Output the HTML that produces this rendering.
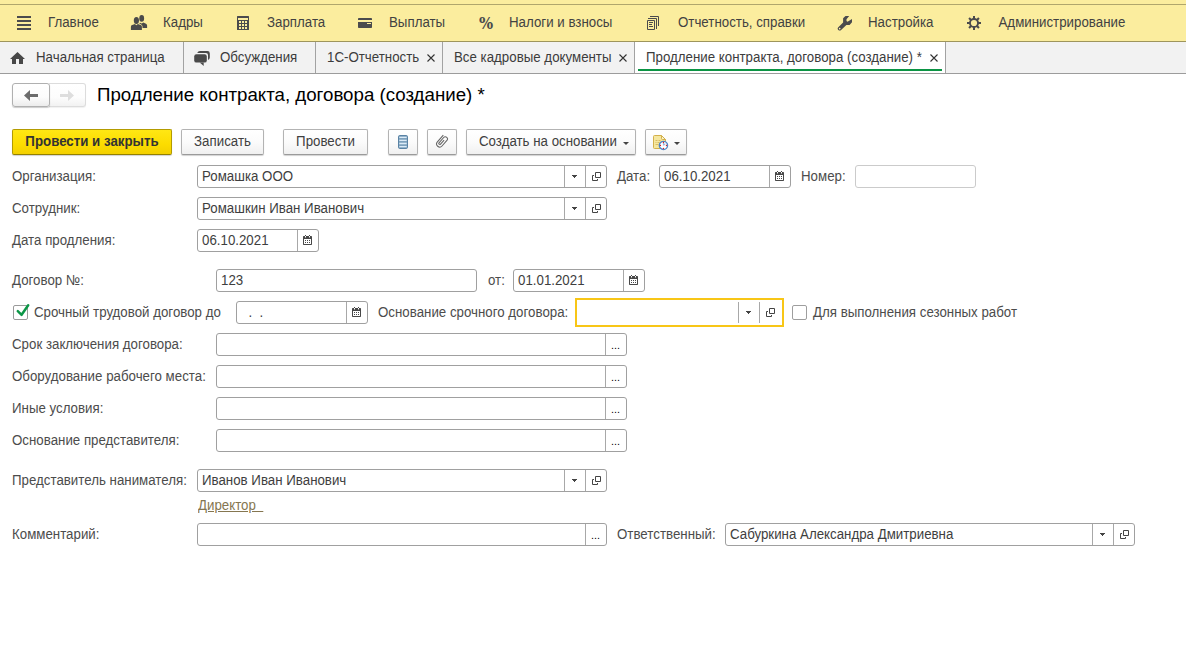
<!DOCTYPE html>
<html lang="ru">
<head>
<meta charset="utf-8">
<title>Продление контракта, договора (создание) *</title>
<style>
*{box-sizing:border-box;margin:0;padding:0}
html,body{width:1186px;height:657px;overflow:hidden;background:#fff}
body{font-family:"Liberation Sans",sans-serif;font-size:13.3px;color:#333;position:relative}
div,span,svg{position:absolute}
#topbar{left:0;top:0;width:1186px;height:41px;background:#fbed9e}
#topline{left:0;top:4px;width:1186px;height:1px;background:#b0a66c}
#topbot{left:0;top:41px;width:1186px;height:1px;background:#9e955c}
.mi{top:13px;height:20px;line-height:20px;color:#424242;white-space:nowrap;transform:scaleY(1.1)}
#tabbar{left:0;top:42px;width:1186px;height:31px;background:#f2f2f2}
#tabbot{left:0;top:73px;width:1186px;height:1px;background:#9c9c9c}
.tsep{top:42px;width:1px;height:31px;background:#a2a2a2}
.tt{top:48px;height:20px;line-height:20px;color:#3c3c3c;white-space:nowrap;transform:scaleY(1.1)}
.lbl{height:23px;line-height:23px;color:#4c4c4c;white-space:nowrap;transform:translateY(-.5px) scaleY(1.1)}
.fld{height:23px;border:1px solid #a0a0a0;border-radius:3px;background:#fff;line-height:21px;color:#3e3e3e;white-space:nowrap}
.fld .v{left:4px;top:0;white-space:pre;height:21px;transform:translateY(-.5px) scaleY(1.1)}
.sep{top:0;bottom:0;width:1px;background:#a8a8a8}
.btn{top:129px;height:26px;border:1px solid #b3b3b3;border-bottom-color:#9a9a9a;border-radius:2px;background:linear-gradient(#ffffff,#fbfbfb 50%,#f0f0f0);line-height:24px;color:#404040;text-align:center;white-space:nowrap;box-shadow:0 1px 1px rgba(0,0,0,.18)}
.btn span{position:static;display:inline-block;height:24px;transform:scaleY(1.1)}
.dots{top:1px;height:21px;line-height:21px;font-size:10.800px;color:#000}
.cb{width:15px;height:15px;border:1px solid #9a9a9a;border-radius:2px;background:#fff}
</style>
</head>
<body>
<div id="topbar"></div><div id="topline"></div><div id="topbot"></div>
<div class="mi" style="left:48px">Главное</div>
<div class="mi" style="left:163px">Кадры</div>
<div class="mi" style="left:267px">Зарплата</div>
<div class="mi" style="left:389px">Выплаты</div>
<div class="mi" style="left:509px">Налоги и взносы</div>
<div class="mi" style="left:678px">Отчетность, справки</div>
<div class="mi" style="left:868px">Настройка</div>
<div class="mi" style="left:998.5px">Администрирование</div>
<svg style="left:17px;top:16px" width="14" height="14" viewBox="0 0 14 14"><path d="M0 0h14v2H0zM0 4h14v2H0zM0 8h14v2H0zM0 12h14v2H0z" fill="#4b4b4d"/></svg>
<svg style="left:130px;top:14px" width="18" height="17" viewBox="0 0 18 17"><g fill="#4a4a4a"><ellipse cx="11.700" cy="4.400" rx="2.400" ry="3.300"/><path d="M10 8.800l1.700.6 1.700-.9 2.600 1.300q1.100.6 1.100 1.800v2.400h-4.600v-1.400q0-1.700-1.600-2.300l-1.600-.6z"/><ellipse cx="6.400" cy="6.500" rx="2.600" ry="3.500"/><path d="M.9 16v-3.300q0-1.300 1.300-1.700l2.700-1 1.500 1.200 1.500-1.200 2.700 1q1.300.4 1.300 1.700V16z"/></g></svg>
<svg style="left:237px;top:16px" width="12" height="14" viewBox="0 0 12 14"><path fill-rule="evenodd" fill="#4b4b4d" d="M.6 0h10.800q.6 0 .6.600v12.800q0 .6-.6.600H.6q-.6 0-.6-.6V.6q0-.6.600-.6zM1 2v2h10V2zM2 5v2h2V5zM5 5v2h2V5zM8 5v2h2V5zM2 8v2h2V8zM5 8v2h2V8zM8 8v2h2V8zM2 11v2h2v-2zM5 11v2h2v-2zM8 11v2h2v-2z"/></svg>
<svg style="left:358px;top:18px" width="14" height="10" viewBox="0 0 14 10"><path fill="#4b4b4d" d="M.8 0h12.400q.8 0 .8.800V2H0V.8Q0 0 .8 0z"/><path fill-rule="evenodd" fill="#4b4b4d" d="M0 4h14v5.200q0 .8-.8.800H.8Q0 10 0 9.200zM9 5v1h4V5z"/></svg>
<div style="left:479px;top:13px;height:22px;line-height:22px;font-family:'DejaVu Serif',serif;font-size:16.500px;font-weight:bold;color:#4b4b4d;transform:scaleX(.9);transform-origin:0 50%">%</div>
<svg style="left:647px;top:16px" width="12" height="14" viewBox="0 0 12 14"><g fill="none" stroke="#4b4b4d" stroke-width="1"><path d="M3 .5h8.500V10"/><path d="M1 2.500h8.500V13"/><path d="M.5 4.500h7v9h-7z"/><path d="M2 6.500h4M2 8.500h3M2 10.500h4"/></g></svg>
<svg style="left:837px;top:15px" width="16" height="16" viewBox="0 0 16 16"><path fill-rule="evenodd" fill="#4b4b4d" d="M6.100 3.300L8.500 1.100H12.200L9.500 4.200V5.900L10.500 6.800L15 3.900V7.200L12.600 9.900H9.400L4.100 14.900A1.900 1.900 0 0 1 1.300 12.200L6.100 7.500ZM2.700 12.750a.75.75 0 1 0 .01 0z"/></svg>
<svg style="left:967px;top:16px" width="14" height="14" viewBox="0 0 14 14"><g fill="#4b4b4d"><rect x="6" y="0" width="2" height="14" transform="rotate(0 7 7)"/><rect x="6" y="0" width="2" height="14" transform="rotate(45 7 7)"/><rect x="6" y="0" width="2" height="14" transform="rotate(90 7 7)"/><rect x="6" y="0" width="2" height="14" transform="rotate(135 7 7)"/></g><circle cx="7" cy="7" r="5" fill="#4b4b4d"/><circle cx="7" cy="7" r="3.100" fill="#fbed9e"/></svg>
<div id="tabbar"></div>
<div style="left:635px;top:42px;width:310px;height:31px;background:#fff"></div>
<div id="tabbot"></div>
<div class="tsep" style="left:183px"></div>
<div class="tsep" style="left:315px"></div>
<div class="tsep" style="left:442px"></div>
<div class="tsep" style="left:634px"></div>
<div class="tsep" style="left:945px"></div>
<div style="left:638px;top:69px;width:304px;height:2px;background:#0b9444"></div>
<div class="tt" style="left:36px">Начальная страница</div>
<div class="tt" style="left:220px">Обсуждения</div>
<div class="tt" style="left:327px">1С-Отчетность</div>
<div class="tt" style="left:454px">Все кадровые документы</div>
<div class="tt" style="left:646px">Продление контракта, договора (создание) *</div>
<svg style="left:427px;top:54px" width="8" height="8" viewBox="0 0 8 8"><path d="M.5.500l7 7M7.500.5l-7 7" stroke="#333" stroke-width="1.100" fill="none"/></svg>
<svg style="left:619px;top:54px" width="8" height="8" viewBox="0 0 8 8"><path d="M.5.500l7 7M7.500.5l-7 7" stroke="#333" stroke-width="1.100" fill="none"/></svg>
<svg style="left:930px;top:54px" width="8" height="8" viewBox="0 0 8 8"><path d="M.5.500l7 7M7.500.5l-7 7" stroke="#333" stroke-width="1.100" fill="none"/></svg>
<svg style="left:10px;top:52px" width="15" height="12" viewBox="0 0 15 12"><path fill="#484848" d="M7.500 0L15 7H13V12H9V7H6V12H2V7H0Z"/></svg>
<svg style="left:194px;top:51px" width="16" height="15" viewBox="0 0 16 15"><g fill="#4a4a4a"><path d="M3.200 1.900Q4 .1 6 .1H13.500A2.300 2.300 0 0 1 15.800 2.400V6.500Q15.800 8.300 14 8.900V4A2.100 2.100 0 0 0 11.900 1.900Z"/><rect x=".2" y="3.200" width="12.600" height="8.400" rx="2.200"/><path d="M5.700 11.500L9.700 14.900V11.500z"/></g></svg>
<div style="left:49px;top:83px;width:37px;height:24px;border:1px solid #dcdcdc;border-left:none;border-radius:0 3px 3px 0;background:linear-gradient(#fff,#fdfdfd 60%,#f2f2f2);box-shadow:0 1px 1px rgba(0,0,0,.06)"></div>
<div style="left:12px;top:83px;width:38px;height:24px;border:1px solid #b0b0b0;border-radius:3px;background:linear-gradient(#fff,#fcfcfc 60%,#ececec);box-shadow:0 1px 1px rgba(0,0,0,.2)"></div>
<svg style="left:24px;top:90px" width="14" height="11" viewBox="0 0 14 11"><path fill="#6c6c6c" d="M0 5.500L6 0v4h8v3H6v4z"/></svg>
<svg style="left:60px;top:90px" width="14" height="11" viewBox="0 0 14 11"><path fill="#dedede" d="M14 5.500L8 0v4H0v3h8v4z"/></svg>
<div style="left:97px;top:82px;height:26px;line-height:26px;font-size:18.700px;color:#000;white-space:nowrap">Продление контракта, договора (создание) *</div>
<div class="btn" style="left:12px;width:160px;background:linear-gradient(#ffe714,#fcdc00 60%,#f3d000);border-color:#b39b00;border-bottom-color:#948000;font-weight:bold;color:#333"><span>Провести и закрыть</span></div>
<div class="btn" style="left:181px;width:83px"><span>Записать</span></div>
<div class="btn" style="left:283px;width:85px"><span>Провести</span></div>
<div class="btn" style="left:388px;width:30px"></div>
<div class="btn" style="left:427px;width:30px"></div>
<div class="btn" style="left:466px;width:170px;text-align:left"><span style="position:absolute;left:12px;top:0;height:24px">Создать на основании</span></div>
<div class="btn" style="left:645px;width:42px"></div>
<svg style="left:623px;top:142px" width="6" height="3" viewBox="0 0 6 3"><path d="M0 0h6L3 3z" fill="#444"/></svg>
<svg style="left:674px;top:142px" width="6" height="3" viewBox="0 0 6 3"><path d="M0 0h6L3 3z" fill="#444"/></svg>
<svg style="left:398px;top:135px" width="10" height="14" viewBox="0 0 10 14"><rect x=".5" y=".5" width="9" height="13" rx="1.200" fill="#7ea2be" stroke="#5a83a5"/><path d="M1.300 2.300h7.400M1.300 5.400h7.400M1.300 8.500h7.400M1.300 11.600h7.400" stroke="#dcebf7" stroke-width="1.300"/></svg>
<svg style="left:435px;top:134px" width="14" height="15" viewBox="0 0 14 15"><g transform="translate(6.600 7.800) rotate(41) scale(.9)"><path d="M-3.400 -6.800V3.200A3.400 3.400 0 0 0 3.400 3.200V-5.100A2.400 2.400 0 0 0 -1.400 -5.100V2.700A1.100 1.100 0 0 0 .8 2.700V-3.300" fill="none" stroke="#666" stroke-width="1.200"/></g></svg>
<svg style="left:653px;top:135px" width="16" height="16" viewBox="0 0 16 16"><path d="M1.500.5h7l4 4v8q0 1-1 1h-10q-1 0-1-1v-11q0-1 1-1z" fill="#f5e79f" stroke="#d3b04c"/><path d="M8.500.5v3q0 1 1 1h3z" fill="#fbf3c8" stroke="#d3b04c" stroke-linejoin="round"/><path d="M2.500 5.500h2M5.500 5.500h2M2.500 7.500h1M4.500 7.500h2M2.500 9.500h3" stroke="#d9bc62" stroke-width="1"/><circle cx="10.450" cy="10.470" r="4.100" fill="#fff" stroke="#4f86c4" stroke-width="1.400"/><path d="M10.450 10.470V7.800M10.450 10.470L12.300 8.600" stroke="#9db9e0" stroke-width="1.100"/><g fill="#e81c1c"><circle cx="10.450" cy="7.500" r=".65"/><circle cx="10.450" cy="13.450" r=".65"/><circle cx="7.450" cy="10.470" r=".65"/><circle cx="13.450" cy="10.470" r=".65"/></g></svg>
<div class="lbl" style="left:12px;top:165px">Организация:</div>
<div class="fld" style="left:197px;top:165px;width:410px"><span class="v">Ромашка ООО</span><div class="sep" style="left:366px"></div><div class="sep" style="left:387px"></div></div>
<svg style="left:572px;top:175px" width="5" height="3" viewBox="0 0 5 3"><path d="M0 0h5v1H4v1H3v1H2V2H1V1H0z" fill="#444"/></svg>
<svg style="left:592px;top:172px" width="9" height="9" viewBox="0 0 9 9"><path d="M3.500.5h5v5h-5z" fill="none" stroke="#444"/><path d="M2 3.500H.5v5h5V7" fill="none" stroke="#444"/></svg>
<div class="lbl" style="left:617px;top:165px">Дата:</div>
<div class="fld" style="left:659px;top:165px;width:132px"><span class="v">06.10.2021</span><div class="sep" style="left:109px"></div></div>
<svg style="left:775px;top:171px" width="9" height="10" viewBox="0 0 9 10"><path fill-rule="evenodd" fill="#484848" d="M.7 1h7.600q.7 0 .7.700v7.600q0 .7-.7.700H.7q-.7 0-.7-.7V1.700q0-.7.700-.7zM1 4v5h7V4zM2 1v1.500h1V1zM6 1v1.500h1V1z"/><path fill="#484848" d="M2 0h1v1H2zM6 0h1v1H6zM2 5h1v1H2zM4 5h1v1H4zM6 5h1v1H6zM2 7h1v1H2zM4 7h1v1H4zM6 7h1v1H6z"/></svg>
<div class="lbl" style="left:801px;top:165px">Номер:</div>
<div class="fld" style="left:855px;top:165px;width:121px;border-color:#cbcbcb"></div>
<div class="lbl" style="left:12px;top:197px">Сотрудник:</div>
<div class="fld" style="left:197px;top:197px;width:410px"><span class="v">Ромашкин Иван Иванович</span><div class="sep" style="left:366px"></div><div class="sep" style="left:387px"></div></div>
<svg style="left:572px;top:207px" width="5" height="3" viewBox="0 0 5 3"><path d="M0 0h5v1H4v1H3v1H2V2H1V1H0z" fill="#444"/></svg>
<svg style="left:592px;top:204px" width="9" height="9" viewBox="0 0 9 9"><path d="M3.500.5h5v5h-5z" fill="none" stroke="#444"/><path d="M2 3.500H.5v5h5V7" fill="none" stroke="#444"/></svg>
<div class="lbl" style="left:12px;top:229px">Дата продления:</div>
<div class="fld" style="left:197px;top:229px;width:122px"><span class="v">06.10.2021</span><div class="sep" style="left:99px"></div></div>
<svg style="left:303px;top:235px" width="9" height="10" viewBox="0 0 9 10"><path fill-rule="evenodd" fill="#484848" d="M.7 1h7.600q.7 0 .7.700v7.600q0 .7-.7.700H.7q-.7 0-.7-.7V1.700q0-.7.700-.7zM1 4v5h7V4zM2 1v1.500h1V1zM6 1v1.500h1V1z"/><path fill="#484848" d="M2 0h1v1H2zM6 0h1v1H6zM2 5h1v1H2zM4 5h1v1H4zM6 5h1v1H6zM2 7h1v1H2zM4 7h1v1H4zM6 7h1v1H6z"/></svg>
<div class="lbl" style="left:12px;top:269px">Договор №:</div>
<div class="fld" style="left:216px;top:269px;width:261px"><span class="v">123</span></div>
<div class="lbl" style="left:488px;top:269px">от:</div>
<div class="fld" style="left:513px;top:269px;width:132px"><span class="v">01.01.2021</span><div class="sep" style="left:109px"></div></div>
<svg style="left:629px;top:275px" width="9" height="10" viewBox="0 0 9 10"><path fill-rule="evenodd" fill="#484848" d="M.7 1h7.600q.7 0 .7.700v7.600q0 .7-.7.700H.7q-.7 0-.7-.7V1.700q0-.7.700-.7zM1 4v5h7V4zM2 1v1.500h1V1zM6 1v1.500h1V1z"/><path fill="#484848" d="M2 0h1v1H2zM6 0h1v1H6zM2 5h1v1H2zM4 5h1v1H4zM6 5h1v1H6zM2 7h1v1H2zM4 7h1v1H4zM6 7h1v1H6z"/></svg>
<div class="cb" style="left:13px;top:305px"></div>
<svg style="left:14.600px;top:302px" width="16" height="16" viewBox="0 0 16 16"><path d="M2.800 9.200l3.800 3.600L13.200 3.300" fill="none" stroke="#0c9647" stroke-width="2.500" stroke-linecap="round" stroke-linejoin="round"/></svg>
<div class="lbl" style="left:34px;top:301px">Срочный трудовой договор до</div>
<div class="fld" style="left:236px;top:301px;width:132px"><span class="v">  .  .    </span><div class="sep" style="left:109px"></div></div>
<svg style="left:352px;top:307px" width="9" height="10" viewBox="0 0 9 10"><path fill-rule="evenodd" fill="#484848" d="M.7 1h7.600q.7 0 .7.700v7.600q0 .7-.7.700H.7q-.7 0-.7-.7V1.700q0-.7.700-.7zM1 4v5h7V4zM2 1v1.500h1V1zM6 1v1.500h1V1z"/><path fill="#484848" d="M2 0h1v1H2zM6 0h1v1H6zM2 5h1v1H2zM4 5h1v1H4zM6 5h1v1H6zM2 7h1v1H2zM4 7h1v1H4zM6 7h1v1H6z"/></svg>
<div class="lbl" style="left:378px;top:301px">Основание срочного договора:</div>
<div style="left:575px;top:298px;width:209px;height:29px;border:2px solid #f8c616;background:#fff"></div>
<div class="sep" style="left:738px;top:302px;height:21px;bottom:auto"></div><div class="sep" style="left:759px;top:302px;height:21px;bottom:auto"></div>
<svg style="left:746px;top:311px" width="5" height="3" viewBox="0 0 5 3"><path d="M0 0h5v1H4v1H3v1H2V2H1V1H0z" fill="#444"/></svg>
<svg style="left:766px;top:308px" width="9" height="9" viewBox="0 0 9 9"><path d="M3.500.5h5v5h-5z" fill="none" stroke="#444"/><path d="M2 3.500H.5v5h5V7" fill="none" stroke="#444"/></svg>
<div class="cb" style="left:792px;top:305px;border-color:#9e9e9e"></div>
<div class="lbl" style="left:813px;top:301px">Для выполнения сезонных работ</div>
<div class="lbl" style="left:12px;top:333px">Срок заключения договора:</div>
<div class="fld" style="left:216px;top:333px;width:411px"><div class="sep" style="left:388px"></div><span class="dots" style="left:394px">...</span></div>
<div class="lbl" style="left:12px;top:365px">Оборудование рабочего места:</div>
<div class="fld" style="left:216px;top:365px;width:411px"><div class="sep" style="left:388px"></div><span class="dots" style="left:394px">...</span></div>
<div class="lbl" style="left:12px;top:397px">Иные условия:</div>
<div class="fld" style="left:216px;top:397px;width:411px"><div class="sep" style="left:388px"></div><span class="dots" style="left:394px">...</span></div>
<div class="lbl" style="left:12px;top:429px">Основание представителя:</div>
<div class="fld" style="left:216px;top:429px;width:411px"><div class="sep" style="left:388px"></div><span class="dots" style="left:394px">...</span></div>
<div class="lbl" style="left:12px;top:469px">Представитель нанимателя:</div>
<div class="fld" style="left:197px;top:469px;width:410px"><span class="v">Иванов Иван Иванович</span><div class="sep" style="left:366px"></div><div class="sep" style="left:387px"></div></div>
<svg style="left:572px;top:479px" width="5" height="3" viewBox="0 0 5 3"><path d="M0 0h5v1H4v1H3v1H2V2H1V1H0z" fill="#444"/></svg>
<svg style="left:592px;top:476px" width="9" height="9" viewBox="0 0 9 9"><path d="M3.500.5h5v5h-5z" fill="none" stroke="#444"/><path d="M2 3.500H.5v5h5V7" fill="none" stroke="#444"/></svg>
<div style="left:198px;top:494px;height:22px;line-height:22px;font-size:14.630px;color:#857650;text-decoration:underline;white-space:pre;transform:scaleX(.909);transform-origin:0 50%">Директор  </div>
<div class="lbl" style="left:12px;top:523px">Комментарий:</div>
<div class="fld" style="left:197px;top:523px;width:410px"><div class="sep" style="left:387px"></div><span class="dots" style="left:393px">...</span></div>
<div class="lbl" style="left:617px;top:523px">Ответственный:</div>
<div class="fld" style="left:725px;top:523px;width:410px"><span class="v">Сабуркина Александра Дмитриевна</span><div class="sep" style="left:366px"></div><div class="sep" style="left:387px"></div></div>
<svg style="left:1100px;top:533px" width="5" height="3" viewBox="0 0 5 3"><path d="M0 0h5v1H4v1H3v1H2V2H1V1H0z" fill="#444"/></svg>
<svg style="left:1120px;top:530px" width="9" height="9" viewBox="0 0 9 9"><path d="M3.500.5h5v5h-5z" fill="none" stroke="#444"/><path d="M2 3.500H.5v5h5V7" fill="none" stroke="#444"/></svg>
</body>
</html>
